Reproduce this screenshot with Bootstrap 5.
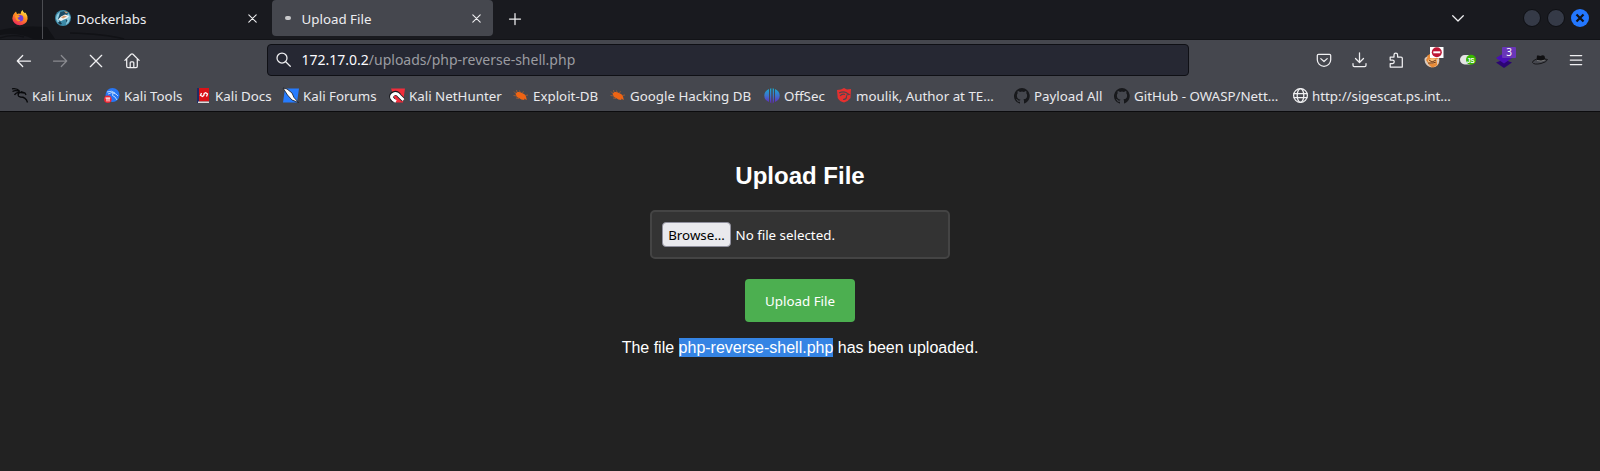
<!DOCTYPE html>
<html lang="en">
<head>
<meta charset="utf-8">
<title>Upload File</title>
<link href="https://cdn.jsdelivr.net/npm/bootstrap@5.3.0/dist/css/bootstrap.min.css" rel="stylesheet">
<style>
body{width:1600px;height:471px;overflow:hidden;background:#222;color:#fff;font-family:"Noto Sans",sans-serif;font-size:13.33px;line-height:18px}
svg{display:block;flex:none;overflow:visible}
.ln{fill:none;stroke:#f0f0f2;stroke-width:1.25;stroke-linecap:round;stroke-linejoin:round}
.tabbar{height:40px;background:#191a1f;border-bottom:1px solid #121317}
.dragon{left:0;top:0;z-index:0}
.tabbar>*:not(.dragon){position:relative}
.pin{width:43px;height:39px;padding:10px 0 0 12px;border-right:1px solid #4c4d52}
.tab{height:36px;color:#ededf0}
.tab-a{width:229px;padding-left:12px;padding-right:15.5px}
.tab-b{width:221px;background:#45474e;border-radius:4px;padding:0 12px 0 13px}
.tab span{padding-top:2px}
.tab .ln{stroke-width:1.1}
.loader{width:6px;height:4px;border-radius:2px;background:#c9c9cb;margin:0 10.5px 1px 0}
.wm{width:18px;height:18px;border-radius:50%;background:#353a47;border:1px solid #0e0f13;margin-right:6px}
.navrow{height:40px;background:#45474e}
.navrow>svg{width:16px;height:16px;margin-top:1px}
.urlbar{width:922px;height:32px;background:#262833;border:1px solid #0f1015;border-radius:4px;font-size:14px;color:#9b9ca1;padding-left:8px;margin-left:127.5px}
.urlbar b{font-weight:400;color:#fbfbfe}
.marks{height:32px;background:#45474e;border-bottom:1px solid #0c0c0e;padding-left:12px;color:#e9e9ec;white-space:nowrap}
.mk{gap:4px}.mk svg{width:16px;height:16px;margin-top:1px}
.cnt{left:6px;top:-5px;width:14px;height:11px;border-radius:1px;background:#6936b8;font-size:10px;line-height:11px;text-align:center}
.page h2{font:bold 24px/28px "Liberation Sans",sans-serif;margin:50px 0 20px}
.filebox{width:300px;height:49px;border:2px solid #444;border-radius:5px;background:#333;padding-left:10px;gap:4.500px}
.browse{width:69px;height:25px;background:#e9e9ed;color:#000;border:1px solid #8f8f9d;border-radius:4px;text-align:center;line-height:24px}
.upbtn{width:110px;height:43px;margin-top:20px;padding:2px 0 0;border:0;border-radius:4px;background:#4caf50;color:#fff;font-size:13.33px}
.upbtn:hover{background:#45a049}
.msg{font:16px/19px "Liberation Sans",sans-serif;margin:16px 0 0}
.msg span{background:#3584e4;display:inline-block;height:19px}
</style>
</head>
<body>
<svg width="0" height="0" class="position-absolute" aria-hidden="true"><defs>
<symbol id="gh" viewBox="0 0 16 16"><path fill="#18191c" d="M8 0a8 8 0 0 0-2.500 15.600c.4.1.5-.2.5-.4v-1.500c-2 .5-2.600-.5-2.800-1-.1-.3-.5-1-.9-1.200-.3-.2-.7-.6 0-.6.7 0 1.100.6 1.300.9.7 1.200 1.900.9 2.400.7.1-.5.3-.9.500-1.100-1.800-.2-3.600-.9-3.600-4 0-.9.3-1.600.8-2.200-.1-.2-.4-1 .1-2.100 0 0 .7-.2 2.200.8a7.500 7.500 0 0 1 4 0c1.500-1 2.200-.8 2.200-.8.4 1.100.2 1.900.1 2.100.5.6.8 1.300.8 2.200 0 3.100-1.900 3.700-3.700 4 .3.2.6.7.6 1.500v2.200c0 .2.100.5.5.4A8 8 0 0 0 8 0z"/></symbol>
<symbol id="bug" viewBox="0 0 16 16"><path fill="#ef6413" d="M2.500 5.500 4.500 4Q7 3.500 9 5 12 5.500 13 8.500L13.800 12 11 10.500 11.500 12Q8 12 6 10 3.500 9.500 2.500 5.500z"/><path fill="none" stroke="#b9622b" stroke-width=".7" d="M3 5.500 1 3.500M4 4 3.500 2M7 4 6.500 2.500M9.500 5 10.500 3.300M12 7.500 15 7M4 8 .5 7.500M6 10.500 3 10"/></symbol>
<linearGradient id="ff" x1=".8" y1="0" x2=".3" y2="1"><stop offset="0" stop-color="#fff04a"/><stop offset=".45" stop-color="#ff8f1f"/><stop offset="1" stop-color="#f0245c"/></linearGradient>
<linearGradient id="os" x1="0" y1="0" x2="0" y2="1"><stop offset="0" stop-color="#18abd0"/><stop offset=".5" stop-color="#3f70cc"/><stop offset="1" stop-color="#6423bd"/></linearGradient>
</defs></svg>

<header>
<div class="tabbar d-flex position-relative">
  <svg class="dragon position-absolute" width="260" height="39"><path fill="#111216" d="M0 30Q22 25 47 27L55 39H33Q18 32 0 35z"/><path fill="none" stroke="#111216" stroke-width="1.300" d="M0 38Q12 34 24 37M70 33Q105 34 124 39"/></svg>
  <div class="pin"><svg width="16" height="16" viewBox="0 0 16 16"><path fill="url(#ff)" d="M2.500 3 4 1.500 5 4Q7 3 8.500 4 8.700 1.500 10.500 0 10.800 2 13 3.200L13.500 2.500Q16 6 15.600 9A7.700 7.300 0 0 1 .3 8.500Q.3 5 2.500 3z"/><circle cx="8" cy="8.200" r="3.300" fill="#7140d8"/><path fill="#ff9a24" d="M3 6Q5 4.500 8 6.200 7 7.500 5.500 7.800 6 10 8.500 10.200 6 12.500 4 9.500z"/></svg></div>
  <div class="tab tab-a d-flex align-items-center">
    <svg width="16" height="16" viewBox="0 0 16 16"><circle cx="8" cy="8" r="8" fill="#3c8aa8"/><path fill="#1b4a63" d="M3 4Q7 0 12 2L13 4 6 7 3 12 1 9z"/><path fill="#8fcbdf" d="M1 9Q1 4 5 2L4 6 3 9 5 12 3 13zM13 3l2.500 4-1.500 5-3 3 1-6z"/><path fill="#f4f6f6" d="M3 9.500 6 6.500 10 4.500 14 6 12 8.500 9 9.500 6 11z"/><path fill="#d39c70" d="M6 7.500 9 5.500 12 6.500 8 8.500zM9 1l4 1.500-2 1z"/><path fill="#18394c" d="M5 11l2 3-2 .5-2-2zM11 9.500l1.500 1-1 2z"/></svg>
    <span class="flex-grow-1" style="padding-left:5.500px">Dockerlabs</span>
    <svg class="ln" width="9" height="9" viewBox="0 0 9 9"><path d="M.8.8 8.200 8.200M8.200.8.8 8.200"/></svg>
  </div>
  <div class="tab tab-b d-flex align-items-center">
    <i class="loader"></i><span class="flex-grow-1">Upload File</span>
    <svg class="ln" width="9" height="9" viewBox="0 0 9 9"><path d="M.8.8 8.200 8.200M8.200.8.8 8.200"/></svg>
  </div>
  <svg class="ln" style="margin:13px 0 0 15.500px" width="12" height="12" viewBox="0 0 12 12"><path d="M6 .5v11M.5 6h11"/></svg>
  <div class="d-flex align-items-center ms-auto" style="height:36px;padding-right:11px">
    <svg class="ln" style="margin-right:59px" width="12" height="7" viewBox="0 0 12 7"><path d="M.7.7 6 6 11.300.7"/></svg>
    <i class="wm"></i><i class="wm"></i>
    <svg width="18" height="18" viewBox="0 0 18 18"><circle cx="9" cy="9" r="9" fill="#2377ff"/><path stroke="#101219" stroke-width="2.200" d="m5.500 5.500 7 7m0-7-7 7"/></svg>
  </div>
</div>

<div class="navrow d-flex align-items-center position-relative">
  <svg class="ln" style="margin-left:16px" viewBox="0 0 16 16"><path d="M6.700 2.500 1.300 8l5.400 5.500M1.500 8h13"/></svg>
  <svg class="ln" style="margin-left:20px;opacity:.4" viewBox="0 0 16 16"><path d="M9.300 2.500 14.700 8l-5.400 5.500M14.500 8h-13"/></svg>
  <svg class="ln" style="margin-left:20px" viewBox="0 0 16 16"><path d="m2.300 2.300 11.400 11.400m0-11.400L2.300 13.700"/></svg>
  <svg class="ln" style="margin-left:19.500px" viewBox="0 0 16 16"><path d="M.9 7.400 7 1.300Q8 .6 9 1.300l6.100 6.100M2.700 6v7.200q0 1.300 1.300 1.300h8q1.300 0 1.300-1.300V6M6.200 14.500V9.700q0-.9.9-.9h1.800q.9 0 .9.9v4.800"/></svg>
  <div class="urlbar d-flex align-items-center">
    <svg class="ln" width="16" height="16" viewBox="0 0 16 16"><circle cx="6" cy="6" r="5"/><path d="m9.700 9.700 4.600 4.600"/></svg>
    <span style="padding-left:9.500px"><b>172.17.0.2</b>/uploads/php-reverse-shell.php</span>
  </div>
  <div class="d-flex ms-auto" style="gap:20px;padding-right:16px">
    <svg class="ln" width="16" height="16" viewBox="0 0 16 16"><path d="M2.500 2.300h11q1.200 0 1.200 1.200V7.800A6.700 6.500 0 0 1 1.300 7.800V3.500Q1.300 2.300 2.500 2.300zM4.800 6.600 8 9.500l3.200-2.900"/></svg>
    <svg class="ln" width="16" height="16" viewBox="0 0 16 16"><path d="M7.500.8v9.500M3.500 6.500l4 4 4-4M1 11.500v1.700q0 1.300 1.300 1.300h10.400q1.300 0 1.300-1.300v-1.700"/></svg>
    <svg class="ln" width="16" height="16" viewBox="0 0 16 16"><path d="M2.200 15V11.500H4.500a1.700 1.700 0 0 0 0-3.500H2.200V5H6V3a1.800 1.800 0 0 1 3.600 0v2H13q1.300 0 1.300 1.300V15z"/></svg>
    <svg width="16" height="16" viewBox="0 0 16 16"><circle cx="8.500" cy="8.500" r="7" fill="#e98b37"/><path fill="#d8cbc0" d="M.5 8Q0 5 4 4.500L2 8l3 5 3 2.500Q1 14 .5 8zM13 7l2-1q1 8-6 9.500L13 13z"/><path fill="#f5ba77" d="M4 8l4-2 5 1-1 4-4 1-4-1z"/><path stroke="#723916" fill="none" d="m5 8 3 2 4-2M4 11h5l3-1"/><path fill="#fff" d="M6-5H19.500V6H6z"/><circle cx="12.800" cy=".3" r="5" fill="#bd1635"/><path stroke="#fff" stroke-width="2" d="M9.300.3h7"/></svg>
    <svg width="16" height="16" viewBox="0 0 16 16"><rect x="0" y="3" width="14" height="9.500" rx="4.700" fill="#e4e4e4"/><circle cx="11" cy="7.800" r="5" fill="#38b800"/><text x="6.700" y="10.800" font-size="8" font-weight="700" textLength="8" lengthAdjust="spacingAndGlyphs" fill="#fff" font-family="Liberation Sans,sans-serif">JS</text></svg>
    <div class="position-relative"><svg width="16" height="16" viewBox="0 0 16 16"><path fill="#2b0573" d="M0 10.500l8-3 8 3-8 5.500z"/><path fill="#4a0fb5" d="M0 6l8-5 8 5-8 5.500z"/></svg><span class="cnt position-absolute">3</span></div>
    <svg width="16" height="16" viewBox="0 0 16 16"><path fill="#101012" d="M4.500 8 5 3.600Q7 3 8.500 4 11 2.500 12.500 4L13.500 8Q9 9.500 4.500 8z"/><path fill="none" stroke="#18181a" d="M4.500 7Q0 9 .5 10.500 2 13 9 11.500 15 10 15.500 7.500L13 7"/><path stroke="#777" d="M5 8.500Q9 10 13 8" fill="none"/></svg>
    <svg class="ln" width="16" height="16" viewBox="0 0 16 16"><path d="M2.300 3.500h11.400M2.300 8h11.400M2.300 12.500h11.400"/></svg>
  </div>
</div>

<nav class="marks d-flex align-items-center">
  <div class="mk d-flex" style="width:92px"><svg viewBox="0 0 16 16"><path fill="none" stroke="#08090b" stroke-width="1.300" d="M0 .8Q5 0 7.500 3M.5 3.500Q4 1.500 8 4M2.500 7Q4 4 9 4.500L13 5M8 4Q4 8 8.500 9 14 9 15.500 14.500M9 3.500l4 1.500 1 2"/></svg><span>Kali Linux</span></div>
  <div class="mk d-flex" style="width:91px"><svg viewBox="0 0 16 16"><circle cx="8.500" cy="7" r="7" fill="#2876f4"/><path fill="none" stroke="#c7e2ff" stroke-width=".9" d="M3 4Q8 2 11 5M4 6Q8 3 12 6L14 8M9 5Q7 8 11 9L13 12"/><circle cx="3.800" cy="11.300" r="3.800" fill="#ed2632"/><path stroke="#fff" fill="none" d="M1.500 10h4.700M3 10v3.500M5 10v3.500"/></svg><span>Kali Tools</span></div>
  <div class="mk d-flex" style="width:88px"><svg viewBox="0 0 16 16"><path fill="#202b63" d="M2 0h2v15H2z"/><path fill="#d91218" d="M4 0h10v13.500H4z"/><path fill="#ddd" d="M3 13.500h11V15H3z"/><path fill="none" stroke="#fff" stroke-width="1.300" d="M6.500 5 5.500 7.200 7.500 8.500 8.800 7.500 9.200 5.500 10.700 4.700 12.500 6 11.500 8.500"/></svg><span>Kali Docs</span></div>
  <div class="mk d-flex" style="width:106px"><svg viewBox="0 0 16 16"><path fill="#267cff" d="M2 .5h14L14 14.500H0z"/><path fill="#fff" stroke="#15171c" stroke-width=".8" d="M0 0 4 1 9 5 11 9.500 15.500 14.500 9 12 4.500 7z"/></svg><span>Kali Forums</span></div>
  <div class="mk d-flex" style="width:124px"><svg viewBox="0 0 16 16"><path fill="#f12d3b" d="M2 .5h14L14 14.500H7z"/><path fill="none" stroke="#17181d" stroke-width="4.500" d="M5 13Q0 8 4.500 5.500 8 4 10.500 8l4 4"/><path fill="none" stroke="#fff" stroke-width="3" d="M7 13.500Q0 10 4 6.500 7.500 4 10.500 8l4 4"/></svg><span>Kali NetHunter</span></div>
  <div class="mk d-flex" style="width:97px"><svg><use href="#bug"/></svg><span>Exploit-DB</span></div>
  <div class="mk d-flex" style="width:154px"><svg><use href="#bug"/></svg><span>Google Hacking DB</span></div>
  <div class="mk d-flex" style="width:72px"><svg viewBox="0 0 16 16"><path fill="url(#os)" d="M5 1v13Q.3 12 .3 7.500T5 1zM6 .7l1.300-.4v15.200Q6 14.500 6 13zM8.700.3l1.300.4v12.300q0 1.500-1.300 2.500zM11 1q4.700 2 4.700 6.500T11 14z"/></svg><span>OffSec</span></div>
  <div class="mk d-flex" style="width:178px"><svg viewBox="0 0 16 16"><path fill="#e5302f" d="M1 2 5 1.500 8 0l3 1.500L15 1l-.5 9Q12 13.500 8 14.500 3.500 13.500 1.700 10z"/><path fill="none" stroke="#51464c" stroke-width="1.200" d="M3 5Q7 3 10 4.500L13 6.500 10.500 7M4 8q2-2.500 5-1.500M7 11.500q4 0 3.500-4"/></svg><span>moulik, Author at TE…</span></div>
  <div class="mk d-flex" style="width:100px"><svg><use href="#gh"/></svg><span>Payload All</span></div>
  <div class="mk d-flex" style="width:178px"><svg><use href="#gh"/></svg><span>GitHub - OWASP/Nett…</span></div>
  <div class="mk d-flex"><svg class="ln" viewBox="0 0 16 16"><circle cx="8.500" cy="7.500" r="6.900"/><ellipse cx="8.500" cy="7.500" rx="3.300" ry="6.900"/><path d="M2 5.500h13M2 9.500h13"/></svg><span>http://sigescat.ps.int…</span></div>
</nav>
</header>

<main class="page d-flex flex-column align-items-center">
  <h2>Upload File</h2>
  <div class="filebox d-flex align-items-center"><span class="browse">Browse…</span><span>No file selected.</span></div>
  <button class="btn upbtn">Upload File</button>
  <p class="msg">The file <span>php-reverse-shell.php</span> has been uploaded.</p>
</main>
<script src="https://cdn.jsdelivr.net/npm/bootstrap@5.3.0/dist/js/bootstrap.bundle.min.js"></script>
</body>
</html>
